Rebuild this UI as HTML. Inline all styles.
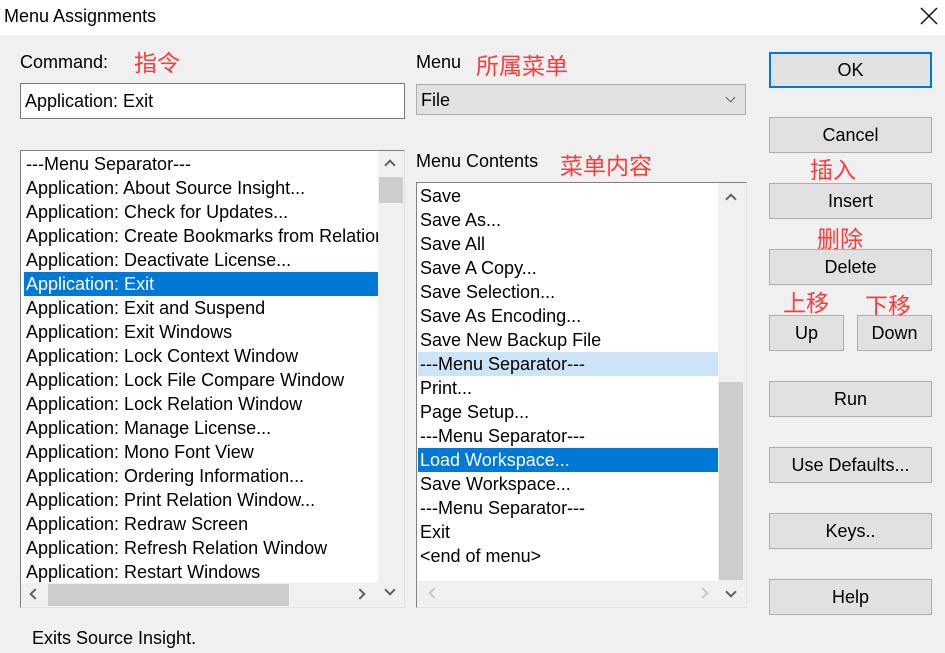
<!DOCTYPE html>
<html><head><meta charset="utf-8"><style>
*{box-sizing:border-box;margin:0;padding:0}
body{width:945px;height:653px;background:#f0f0f0;font-family:"Liberation Sans","Noto Sans CJK SC",sans-serif;font-size:18px;color:#000;position:relative;overflow:hidden}
.a{position:absolute;white-space:nowrap}
.r{position:absolute;color:#ff3a3a;font-size:23px;font-family:"Noto Sans CJK SC",sans-serif;line-height:26px}
.btn{position:absolute;background:#e1e1e1;border:1px solid #adadad;text-align:center;line-height:35px;height:36px}
.row{height:24px;line-height:25px;padding-left:2px;white-space:nowrap}
.sel{background:#0078d7;color:#fff}
.chev{position:absolute;width:8px;height:8px;border-left:2px solid #606060;border-top:2px solid #606060}
</style></head><body>
<div class="a" style="left:0;top:0;width:945px;height:35px;background:#fff"></div>
<div class="a" style="left:4px;top:6px;font-size:18px">Menu Assignments</div>
<svg class="a" style="left:920px;top:7px" width="18" height="18"><path d="M1 1L17 17M17 1L1 17" stroke="#000" stroke-width="1.3"/></svg>

<div class="a" style="left:20px;top:52px">Command:</div>
<div class="r" style="left:134px;top:48px">指令</div>
<div class="a" style="left:20px;top:83px;width:385px;height:36px;background:#fff;border:1px solid #7a7a7a;padding:4px 4px;line-height:27px">Application: Exit</div>

<div class="a" style="left:416px;top:52px">Menu</div>
<div class="r" style="left:476px;top:51px">所属菜单</div>
<div class="a" style="left:416px;top:84px;width:330px;height:31px;background:#e1e1e1;border:1px solid #adadad;padding-left:4px;line-height:30px">File</div>
<div class="chev" style="left:727px;top:94px;transform:rotate(225deg);width:7px;height:7px;border-width:1.5px"></div>

<div class="r" style="left:250px;top:148px">菜单列表</div>
<div class="a" style="left:20px;top:150px;width:385px;height:458px;background:#fff;border:1px solid #828282;border-right-color:#e3e3e3;border-bottom-color:#e3e3e3;overflow:hidden">
<div style="padding:1px 0 0 3px;width:357px;overflow:hidden">
<div class="row">---Menu Separator---</div>
<div class="row">Application: About Source Insight...</div>
<div class="row">Application: Check for Updates...</div>
<div class="row">Application: Create Bookmarks from Relation</div>
<div class="row">Application: Deactivate License...</div>
<div class="row sel">Application: Exit</div>
<div class="row">Application: Exit and Suspend</div>
<div class="row">Application: Exit Windows</div>
<div class="row">Application: Lock Context Window</div>
<div class="row">Application: Lock File Compare Window</div>
<div class="row">Application: Lock Relation Window</div>
<div class="row">Application: Manage License...</div>
<div class="row">Application: Mono Font View</div>
<div class="row">Application: Ordering Information...</div>
<div class="row">Application: Print Relation Window...</div>
<div class="row">Application: Redraw Screen</div>
<div class="row">Application: Refresh Relation Window</div>
<div class="row">Application: Restart Windows</div>
</div>
<div class="a" style="left:357px;top:0;width:26px;height:456px;background:#f0f0f0"></div>
<div class="a" style="left:358px;top:26px;width:24px;height:26px;background:#cdcdcd"></div>
<div class="a" style="left:0;top:432px;width:357px;height:24px;background:#f0f0f0"></div>
<div class="a" style="left:27px;top:433px;width:241px;height:22px;background:#cdcdcd"></div>
</div>
<div class="chev" style="left:386px;top:161px;transform:rotate(45deg)"></div>
<div class="chev" style="left:386px;top:586px;transform:rotate(225deg)"></div>
<div class="chev" style="left:31px;top:590px;transform:rotate(-45deg)"></div>
<div class="chev" style="left:356px;top:590px;transform:rotate(135deg)"></div>

<div class="a" style="left:416px;top:151px">Menu Contents</div>
<div class="r" style="left:560px;top:151px">菜单内容</div>
<div class="a" style="left:416px;top:182px;width:331px;height:426px;background:#fff;border:1px solid #828282;border-right-color:#e3e3e3;border-bottom-color:#e3e3e3;overflow:hidden">
<div style="padding:1px 0 0 1px;width:301px">
<div class="row">Save</div>
<div class="row">Save As...</div>
<div class="row">Save All</div>
<div class="row">Save A Copy...</div>
<div class="row">Save Selection...</div>
<div class="row">Save As Encoding...</div>
<div class="row">Save New Backup File</div>
<div class="row" style="background:#cce4f7">---Menu Separator---</div>
<div class="row">Print...</div>
<div class="row">Page Setup...</div>
<div class="row">---Menu Separator---</div>
<div class="row sel">Load Workspace...</div>
<div class="row">Save Workspace...</div>
<div class="row">---Menu Separator---</div>
<div class="row">Exit</div>
<div class="row">&lt;end of menu&gt;</div>
</div>
<div class="a" style="left:301px;top:0;width:28px;height:424px;background:#f0f0f0"></div>
<div class="a" style="left:302px;top:199px;width:24px;height:198px;background:#cdcdcd"></div>
<div class="a" style="left:0;top:398px;width:301px;height:26px;background:#f0f0f0"></div>
</div>
<div class="chev" style="left:727px;top:195px;transform:rotate(45deg)"></div>
<div class="chev" style="left:727px;top:588px;transform:rotate(225deg)"></div>
<div class="chev" style="left:430px;top:589px;transform:rotate(-45deg);border-color:#c8c8c8"></div>
<div class="chev" style="left:699px;top:589px;transform:rotate(135deg);border-color:#c8c8c8"></div>

<div class="a" style="left:32px;top:628px">Exits Source Insight.</div>

<div class="btn" style="left:769px;top:52px;width:163px;border:2px solid #0078d7;line-height:33px">OK</div>
<div class="btn" style="left:769px;top:117px;width:163px">Cancel</div>
<div class="r" style="left:810px;top:155px">插入</div>
<div class="btn" style="left:769px;top:183px;width:163px">Insert</div>
<div class="r" style="left:817px;top:224px">删除</div>
<div class="btn" style="left:769px;top:249px;width:163px">Delete</div>
<div class="r" style="left:783px;top:288px">上移</div>
<div class="r" style="left:865px;top:291px">下移</div>
<div class="btn" style="left:769px;top:315px;width:75px">Up</div>
<div class="btn" style="left:857px;top:315px;width:75px">Down</div>
<div class="btn" style="left:769px;top:381px;width:163px">Run</div>
<div class="btn" style="left:769px;top:447px;width:163px">Use Defaults...</div>
<div class="btn" style="left:769px;top:513px;width:163px">Keys..</div>
<div class="btn" style="left:769px;top:579px;width:163px">Help</div>
</body></html>
